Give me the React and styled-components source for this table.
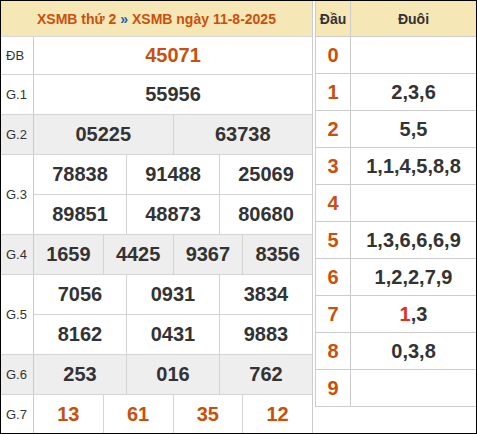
import React from 'react';
import styled, { createGlobalStyle } from 'styled-components';

const GlobalStyle = createGlobalStyle`
  html, body {
    margin: 0;
    padding: 0;
    background: #fff;
    font-family: 'Liberation Sans', Arial, sans-serif;
  }
`

const ORANGE = '#c9500c'

const prizes = [
  { label: 'ĐB', rows: [['45071']], h: 37, hot: true },
  { label: 'G.1', rows: [['55956']], h: 39 },
  { label: 'G.2', rows: [['05225', '63738']], h: 39, grey: true },
  { label: 'G.3', rows: [['78838', '91488', '25069'], ['89851', '48873', '80680']], h: 39 },
  { label: 'G.4', rows: [['1659', '4425', '9367', '8356']], h: 39, grey: true },
  { label: 'G.5', rows: [['7056', '0931', '3834'], ['8162', '0431', '9883']], h: 39 },
  { label: 'G.6', rows: [['253', '016', '762']], h: 39, grey: true },
  { label: 'G.7', rows: [['13', '61', '35', '12']], h: 38, hot: true, last: true },
]

const loto = [
  { head: '0', tail: [] },
  { head: '1', tail: ['2', '3', '6'] },
  { head: '2', tail: ['5', '5'] },
  { head: '3', tail: ['1', '1', '4', '5', '8', '8'] },
  { head: '4', tail: [] },
  { head: '5', tail: ['1', '3', '6', '6', '6', '9'] },
  { head: '6', tail: ['1', '2', '2', '7', '9'] },
  { head: '7', tail: ['1', '3'], special: 0 },
  { head: '8', tail: ['0', '3', '8'] },
  { head: '9', tail: [] },
]

function App() {
  return (
    <>
      <GlobalStyle />
      <Frame>
        <ResultTable>
          <TitleRow>
            XSMB thứ 2 <Arrow>»</Arrow> XSMB ngày 11-8-2025
          </TitleRow>
          {prizes.map((p) => (
            <PrizeRow key={p.label} $grey={p.grey} $last={p.last}>
              <Label>{p.label}</Label>
              <Numbers>
                {p.rows.map((r, i) => (
                  <SubRow key={i} $h={p.h} $border={i < p.rows.length - 1}>
                    {r.map((n, j) => (
                      <Num key={j} $first={j === 0} $hot={p.hot}>{n}</Num>
                    ))}
                  </SubRow>
                ))}
              </Numbers>
            </PrizeRow>
          ))}
        </ResultTable>

        <LotoTable>
          <LotoRow $head>
            <HeadCell $title>Đầu</HeadCell>
            <TailCell $title>Đuôi</TailCell>
          </LotoRow>
          {loto.map((l) => (
            <LotoRow key={l.head}>
              <HeadCell>{l.head}</HeadCell>
              <TailCell>
                {l.tail.map((t, i) => (
                  <React.Fragment key={i}>
                    {i > 0 && ','}
                    {l.special === i ? <Red>{t}</Red> : t}
                  </React.Fragment>
                ))}
              </TailCell>
            </LotoRow>
          ))}
        </LotoTable>
      </Frame>
    </>
  )
}

export default App

const Frame = styled.div`
  box-sizing: border-box;
  width: 477px;
  height: 434px;
  border: 1px solid #000;
  display: flex;
  align-items: flex-start;
  gap: 2px;
  background: #fff;
  overflow: hidden;
`

const ResultTable = styled.div`
  width: 312px;
  flex-shrink: 0;
  border-right: 1px solid #cccccc;
  box-sizing: border-box;
  display: flex;
  flex-direction: column;
`

const TitleRow = styled.div`
  height: 35px;
  background: #f6e7b7;
  border-bottom: 1px solid #d8d8d8;
  display: flex;
  align-items: center;
  justify-content: center;
  color: ${ORANGE};
  font-size: 14px;
  font-weight: bold;
  white-space: pre;
`

const Arrow = styled.span`
  color: #1a5fb4;
`

const PrizeRow = styled.div`
  display: flex;
  background: ${p => (p.$grey ? '#eeeeee' : '#fff')};
  border-bottom: ${p => (p.$last ? 'none' : '1px solid #d4d4d4')};
`

const Label = styled.div`
  width: 33px;
  flex-shrink: 0;
  box-sizing: border-box;
  border-right: 1px solid #cccccc;
  display: flex;
  align-items: center;
  padding-left: 5px;
  font-size: 13px;
  color: #333;
`

const Numbers = styled.div`
  flex: 1;
  display: flex;
  flex-direction: column;
`

const SubRow = styled.div`
  height: ${p => p.$h}px;
  display: flex;
  border-bottom: ${p => (p.$border ? '1px solid #d4d4d4' : 'none')};
`

const Num = styled.div`
  flex: 1;
  display: flex;
  align-items: center;
  justify-content: center;
  border-left: ${p => (p.$first ? 'none' : '1px solid #d4d4d4')};
  font-size: 20px;
  font-weight: bold;
  color: ${p => (p.$hot ? ORANGE : '#333')};
`

const LotoTable = styled.div`
  flex: 1;
  border-left: 1px solid #cccccc;
  display: flex;
  flex-direction: column;
`

const LotoRow = styled.div`
  height: ${p => (p.$head ? 35 : 36)}px;
  display: flex;
  border-bottom: 1px solid #cccccc;
  background: ${p => (p.$head ? '#f6e7b7' : '#fff')};
`

const HeadCell = styled.div`
  width: 35px;
  box-sizing: border-box;
  border-right: 1px solid #cccccc;
  display: flex;
  align-items: center;
  justify-content: center;
  font-weight: bold;
  font-size: ${p => (p.$title ? '14px' : '20px')};
  color: ${p => (p.$title ? '#333' : ORANGE)};
`

const TailCell = styled.div`
  flex: 1;
  display: flex;
  align-items: center;
  justify-content: center;
  font-weight: bold;
  font-size: ${p => (p.$title ? '14px' : '20px')};
  color: #333;
`

const Red = styled.span`
  color: #e0301e;
`
